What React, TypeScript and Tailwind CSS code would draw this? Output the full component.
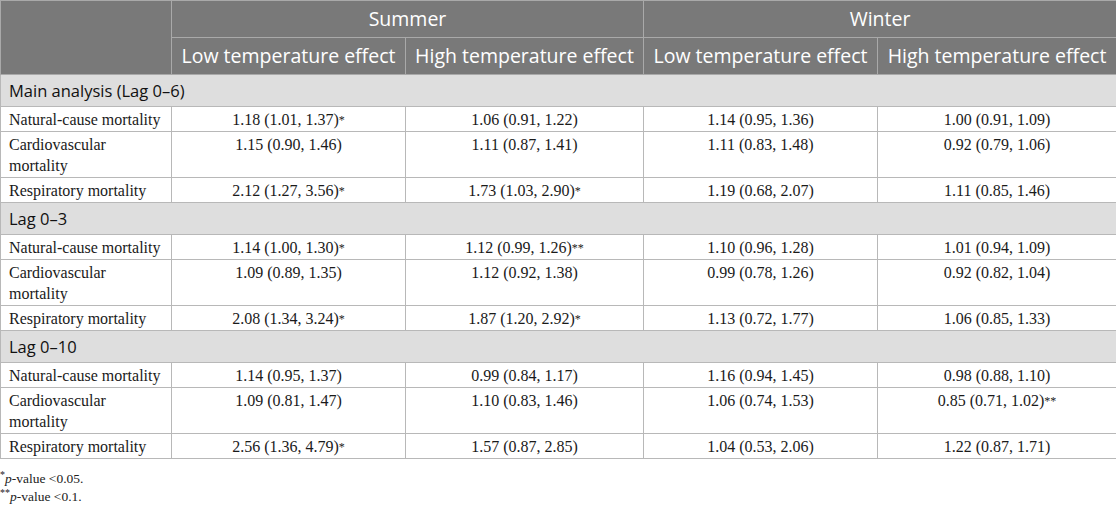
const groups = [
  {
    title: 'Main analysis (Lag 0–6)',
    rows: [
      ['Natural-cause mortality', '1.18 (1.01, 1.37)*', '1.06 (0.91, 1.22)', '1.14 (0.95, 1.36)', '1.00 (0.91, 1.09)'],
      ['Cardiovascular mortality', '1.15 (0.90, 1.46)', '1.11 (0.87, 1.41)', '1.11 (0.83, 1.48)', '0.92 (0.79, 1.06)'],
      ['Respiratory mortality', '2.12 (1.27, 3.56)*', '1.73 (1.03, 2.90)*', '1.19 (0.68, 2.07)', '1.11 (0.85, 1.46)'],
    ],
  },
  {
    title: 'Lag 0–3',
    rows: [
      ['Natural-cause mortality', '1.14 (1.00, 1.30)*', '1.12 (0.99, 1.26)**', '1.10 (0.96, 1.28)', '1.01 (0.94, 1.09)'],
      ['Cardiovascular mortality', '1.09 (0.89, 1.35)', '1.12 (0.92, 1.38)', '0.99 (0.78, 1.26)', '0.92 (0.82, 1.04)'],
      ['Respiratory mortality', '2.08 (1.34, 3.24)*', '1.87 (1.20, 2.92)*', '1.13 (0.72, 1.77)', '1.06 (0.85, 1.33)'],
    ],
  },
  {
    title: 'Lag 0–10',
    rows: [
      ['Natural-cause mortality', '1.14 (0.95, 1.37)', '0.99 (0.84, 1.17)', '1.16 (0.94, 1.45)', '0.98 (0.88, 1.10)'],
      ['Cardiovascular mortality', '1.09 (0.81, 1.47)', '1.10 (0.83, 1.46)', '1.06 (0.74, 1.53)', '0.85 (0.71, 1.02)**'],
      ['Respiratory mortality', '2.56 (1.36, 4.79)*', '1.57 (0.87, 2.85)', '1.04 (0.53, 2.06)', '1.22 (0.87, 1.71)'],
    ],
  },
];

function Value({ text }: { text: string }) {
  const m = text.match(/^(.*?)(\*+)$/);
  if (!m) return <>{text}</>;
  return (
    <>
      {m[1]}
      <sup className="text-[12px] relative -top-[1px]">{m[2]}</sup>
    </>
  );
}

export default function App() {
  const head = 'border border-[#a9a9a9] bg-[#797979] text-white font-normal text-[19.5px] leading-[24px] whitespace-nowrap';
  const cell = 'border border-[#b8b8b8] px-2 pt-[2px] pb-[1px] align-top';

  return (
    <div className="w-[1116px] h-[507px] bg-white overflow-hidden font-['Liberation_Serif',serif] text-[16px] leading-[21px] text-[#1a1a1a]">
      <table className="w-[1116px] table-fixed border-collapse">
        <colgroup>
          <col className="w-[171px]" />
          <col className="w-[234px]" />
          <col className="w-[238px]" />
          <col className="w-[234px]" />
          <col className="w-[239px]" />
        </colgroup>
        <thead className="font-['Open_Sans',sans-serif]">
          <tr className="h-[37px]">
            <th rowSpan={2} className={head}></th>
            <th colSpan={2} className={head}>Summer</th>
            <th colSpan={2} className={head}>Winter</th>
          </tr>
          <tr className="h-[37px]">
            <th className={head}>Low temperature effect</th>
            <th className={head}>High temperature effect</th>
            <th className={head}>Low temperature effect</th>
            <th className={head}>High temperature effect</th>
          </tr>
        </thead>
        <tbody>
          {groups.map((g) => (
            <>
              <tr key={g.title} className="h-[32px]">
                <td
                  colSpan={5}
                  className="border border-[#b8b8b8] bg-[#dedede] px-2 font-['Open_Sans',sans-serif] text-[16.5px] text-[#111]"
                >
                  {g.title}
                </td>
              </tr>
              {g.rows.map((r) => (
                <tr key={g.title + r[0]}>
                  <td className={cell}>{r[0]}</td>
                  {r.slice(1).map((v, i) => (
                    <td key={i} className={cell + ' text-center'}>
                      <Value text={v} />
                    </td>
                  ))}
                </tr>
              ))}
            </>
          ))}
        </tbody>
      </table>
      <div className="mt-[11px] text-[13.5px] leading-[18px] text-[#222]">
        <p>
          <sup className="text-[10px]">*</sup>
          <i>p</i>-value &lt;0.05.
        </p>
        <p>
          <sup className="text-[10px]">**</sup>
          <i>p</i>-value &lt;0.1.
        </p>
      </div>
    </div>
  );
}
